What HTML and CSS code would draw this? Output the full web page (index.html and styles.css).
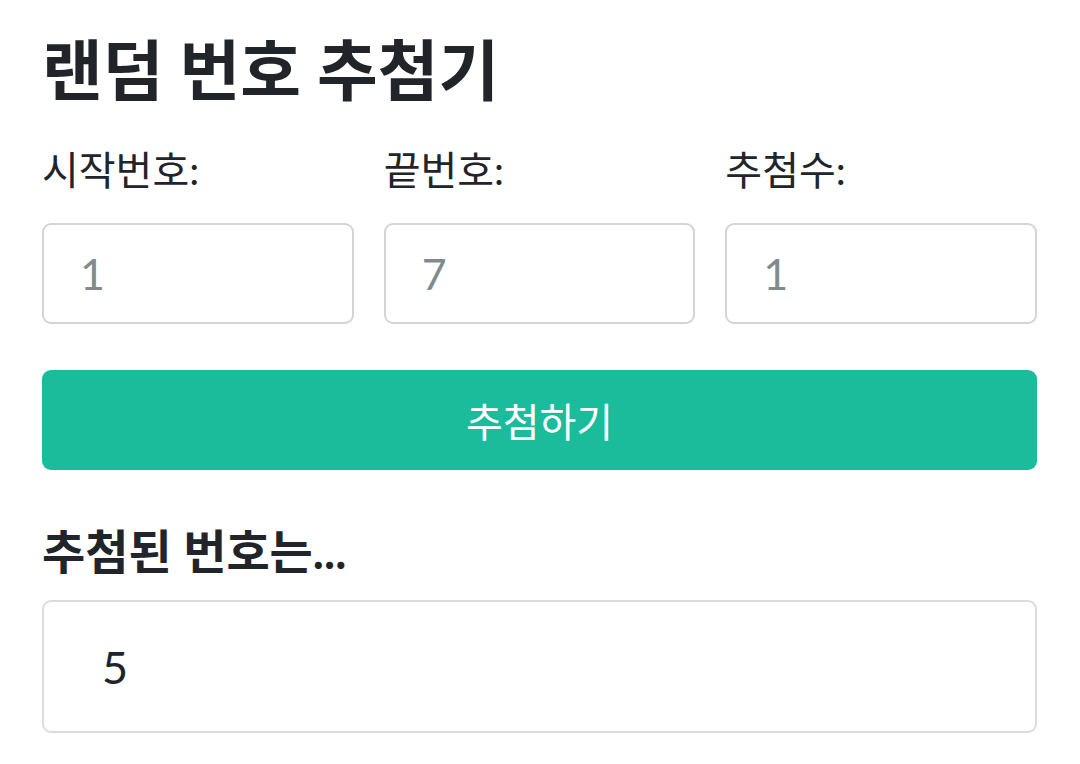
FILE: index.html
```html
<!DOCTYPE html>
<html lang="ko">
<head>
<meta charset="utf-8">
<title>랜덤 번호 추첨기</title>
<link rel="stylesheet" href="styles.css">
</head>
<body>
<main class="app">
  <h1 class="title">랜덤 번호 추첨기</h1>
  <div class="fields">
    <div class="field">
      <label class="label" for="start">시작번호:</label>
      <input class="input" id="start" type="text" placeholder="1">
    </div>
    <div class="field">
      <label class="label" for="end">끝번호:</label>
      <input class="input" id="end" type="text" placeholder="7">
    </div>
    <div class="field">
      <label class="label" for="count">추첨수:</label>
      <input class="input" id="count" type="text" placeholder="1">
    </div>
  </div>
  <button class="draw" type="button">추첨하기</button>
  <h2 class="subtitle">추첨된 번호는...</h2>
  <div class="result">5</div>
</main>
</body>
</html>
```

FILE: styles.css
```css
* { box-sizing: border-box; }

html, body {
  margin: 0;
  padding: 0;
  background: #ffffff;
}

body {
  font-family: Lato, "Noto Sans CJK KR", sans-serif;
  color: #212529;
}

.app {
  padding: 28px 43px 0 42px;
  display: flex;
  flex-direction: column;
}

.title {
  margin: 0;
  font-size: 66px;
  font-weight: 700;
  line-height: 84px;
}

.fields {
  margin-top: 33px;
  display: grid;
  grid-template-columns: repeat(3, 1fr);
  column-gap: 30px;
}

.field {
  display: flex;
  flex-direction: column;
}

.label {
  font-size: 40px;
  line-height: 50px;
  font-weight: 400;
}

.input {
  margin-top: 28px;
  height: 101px;
  width: 100%;
  border: 2px solid #d2d4d6;
  border-radius: 9px;
  padding: 0 36px;
  font-family: Lato, "Noto Sans CJK KR", sans-serif;
  font-size: 43px;
  color: #212529;
  background: #fff;
  outline: none;
}

.input::placeholder {
  color: #7f8c8d;
  opacity: 1;
}

.draw {
  margin-top: 46px;
  height: 100px;
  width: 100%;
  border: 0;
  border-radius: 9px;
  background: #1abc9c;
  color: #ffffff;
  font-family: Lato, "Noto Sans CJK KR", sans-serif;
  font-size: 40px;
}

.subtitle {
  margin: 51px 0 0;
  font-size: 47px;
  font-weight: 700;
  line-height: 60px;
}

.result {
  margin-top: 19px;
  height: 133px;
  border: 2px solid #dcdcdc;
  border-radius: 9px;
  padding: 0 58px;
  display: flex;
  align-items: center;
  font-size: 45px;
  color: #212529;
}
```
